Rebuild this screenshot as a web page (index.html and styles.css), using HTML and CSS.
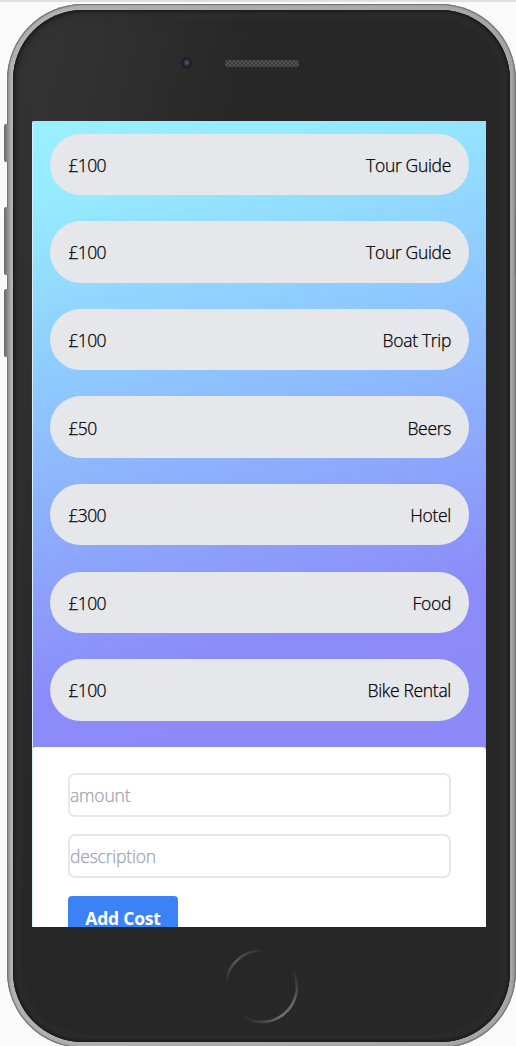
FILE: index.html
```html
<!DOCTYPE html>
<html lang="en">
<head>
<meta charset="utf-8">
<title>Trip Costs</title>
<link rel="stylesheet" href="styles.css">
</head>
<body>
<div class="stage">
  <span class="side-key key-mute"></span>
  <span class="side-key key-up"></span>
  <span class="side-key key-down"></span>
  <span class="side-key key-power"></span>
  <div class="phone">
    <div class="bezel">
      <header class="sensors"><span class="camera"></span><span class="speaker"></span></header>
      <main class="screen">
        <ul class="costs">
          <li class="cost"><span class="amount">£100</span><span>Tour Guide</span></li>
          <li class="cost"><span class="amount">£100</span><span>Tour Guide</span></li>
          <li class="cost"><span class="amount">£100</span><span>Boat Trip</span></li>
          <li class="cost"><span class="amount">£50</span><span>Beers</span></li>
          <li class="cost"><span class="amount">£300</span><span>Hotel</span></li>
          <li class="cost"><span class="amount">£100</span><span>Food</span></li>
          <li class="cost"><span class="amount">£100</span><span>Bike Rental</span></li>
        </ul>
        <form class="cost-form">
          <input class="field" type="text" placeholder="amount">
          <input class="field" type="text" placeholder="description">
          <button class="submit" type="button">Add Cost</button>
        </form>
      </main>
      <footer class="chin">
        <svg class="home" viewBox="0 0 76 76" fill="none" stroke-width="2.6" stroke-linecap="round">
          <defs>
            <linearGradient id="upper" gradientUnits="userSpaceOnUse" x1="2" y1="34" x2="42" y2="2">
              <stop offset="0" stop-color="#282828"/><stop offset=".4" stop-color="#585858"/><stop offset="1" stop-color="#282828"/>
            </linearGradient>
            <linearGradient id="lower" gradientUnits="userSpaceOnUse" x1="18" y1="68" x2="74" y2="24">
              <stop offset="0" stop-color="#282828"/><stop offset=".45" stop-color="#707070"/><stop offset=".7" stop-color="#656565"/><stop offset="1" stop-color="#282828"/>
            </linearGradient>
          </defs>
          <path d="M3 36A35 35 0 0 1 42 3" stroke="url(#upper)"/>
          <path d="M18 67A35 35 0 0 0 71 25" stroke="url(#lower)"/>
        </svg>
      </footer>
    </div>
  </div>
</div>
</body>
</html>
```
FILE: styles.css
```css
* { box-sizing: border-box; }
body { margin: 0; font-family: "Open Sans", "Noto Sans", sans-serif; font-size: 17.5px; font-weight: 300; color: #000; background: #fafafa; }
.stage { position: relative; height: 1046px; overflow: hidden; padding: 2px 0 0 7px; border-top: 2px solid #e0e0e0; }
.phone { width: 509px; height: 1044px; border-radius: 76px; padding: 6px; background: linear-gradient(90deg, #858585, #b2b2b2 4px, #a6a6a6 505px, #858585); box-shadow: inset 0 0 0 1px #777, inset 0 0 2px 1px #888; }
.bezel { height: 100%; border-radius: 70px; padding: 0 24px 0 19px; background: linear-gradient(105deg, #353535, #303030 14%, #272727 32%, #272727); box-shadow: inset 0 0 3px 2px #1b1b1b, inset 0 0 9px 7px #2e2e2e; display: flex; flex-direction: column; }
.sensors { height: 111px; flex: none; display: flex; align-items: flex-start; padding: 47px 0 0 149px; gap: 33px; }
.camera { width: 11px; height: 12px; border-radius: 50%; background: radial-gradient(circle at 52% 48%, #555562 0 10%, #30303d 30%, #1c1c26 55%, #23232a); }
.speaker { width: 74px; height: 7px; margin-top: 3px; border-radius: 3px; background: conic-gradient(#3d3d3d 25%, #505050 0 50%, #3d3d3d 0 75%, #505050 0) 0 0 / 4px 4px; }
.screen { width: 454px; height: 806px; flex: none; overflow: hidden; border-left: 1px solid #d4efff; border-radius: 2px 0 0 0; background: linear-gradient(165deg, #99f0ff 0, #96ebff 10%, #8ec5fe 36%, #8b8bf9 73%, #8b89f8 100%) 0 0 / 100% 680px no-repeat, #8b89f8; }
.costs { list-style: none; margin: 0; padding: 12.7px 17px 26.3px 17.4px; display: flex; flex-direction: column; gap: 26.3px; }
.cost { height: 61.3px; padding: 1px 18px 0 18px; border-radius: 31px; background: #e5e7eb; display: flex; justify-content: space-between; align-items: center; letter-spacing: -.32px; -webkit-text-stroke: .25px currentColor; }
.amount { letter-spacing: -.6px; }
.cost-form { height: 230px; margin-left: -1px; padding: 26.3px 35px 0 36px; border-radius: 4px 4px 0 0; background: #fff; display: flex; flex-direction: column; align-items: flex-start; gap: 17.5px; }
.field { width: 100%; height: 43.8px; padding: 0; border: 2px solid #e5e7eb; border-radius: 7px; background: #fff; font: inherit; letter-spacing: -.2px; -webkit-text-stroke: .25px #9ca3af; }
.field::placeholder { color: #9ca3af; opacity: 1; }
.submit { width: 110px; height: 44px; padding: 0; border: 0; border-radius: 4px; background: #3b82f6; color: #fff; font: inherit; font-weight: 700; letter-spacing: -.2px; }
.chin { flex: 1; padding: 21px 0 0 191px; }
.home { display: block; width: 76px; height: 76px; }
.side-key { position: absolute; width: 5px; border-radius: 2px 0 0 2px; background: linear-gradient(90deg, #666, #999); }
.key-mute { left: 4px; top: 122px; height: 38px; }
.key-up { left: 4px; top: 205px; height: 68px; }
.key-down { left: 4px; top: 287px; height: 68px; }
.key-power { left: 515px; top: 205px; height: 68px; z-index: 1; }
```
